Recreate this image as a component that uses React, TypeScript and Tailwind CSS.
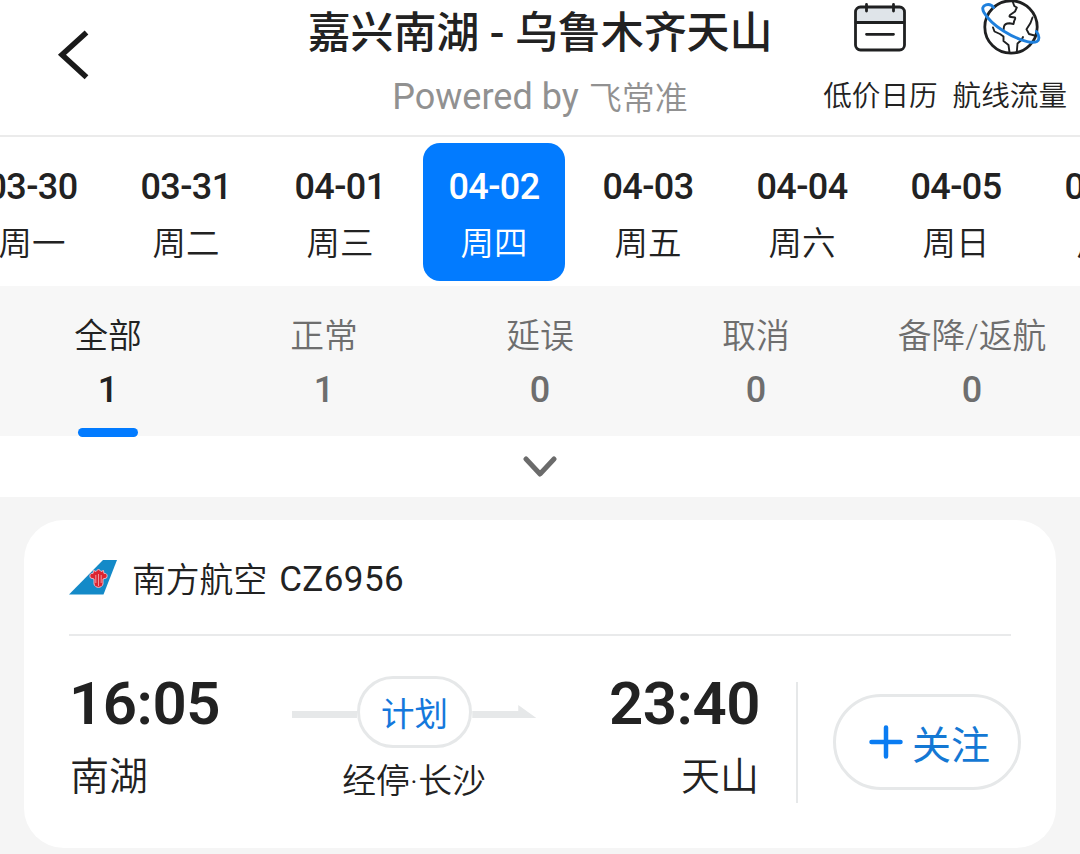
import React from 'react';

interface DateItem {
  date: string;
  weekday: string;
}

interface StatusItem {
  label: string;
  count: number;
}

const dates: DateItem[] = [
  { date: '03-30', weekday: '周一' },
  { date: '03-31', weekday: '周二' },
  { date: '04-01', weekday: '周三' },
  { date: '04-02', weekday: '周四' },
  { date: '04-03', weekday: '周五' },
  { date: '04-04', weekday: '周六' },
  { date: '04-05', weekday: '周日' },
  { date: '04-06', weekday: '周一' },
];

const statuses: StatusItem[] = [
  { label: '全部', count: 1 },
  { label: '正常', count: 1 },
  { label: '延误', count: 0 },
  { label: '取消', count: 0 },
  { label: '备降/返航', count: 0 },
];

function CalendarIcon() {
  return (
    <svg width="54" height="54" viewBox="0 0 54 54" fill="none" stroke="#1f2021" strokeWidth="2.8" strokeLinecap="round">
      <path d="M3 22V12a5 5 0 0 1 5-5h38a5 5 0 0 1 5 5v10z" fill="#dfe4e9" stroke="none" />
      <rect x="2.500" y="7" width="49" height="43" rx="5" />
      <path d="M3 22.500h48M13.500 4.500v6.500M40.500 4.500v6.500M13.500 34.300h27" />
    </svg>
  );
}

function GlobeIcon() {
  return (
    <svg width="62" height="58" viewBox="-1 0 62 58" fill="none" strokeLinecap="round" strokeLinejoin="round">
      <circle cx="31" cy="27" r="26.200" stroke="#1f2021" strokeWidth="2.800" />
      <g stroke="#1f2021" strokeWidth="1.900">
        <path d="M33 2.500L34.300 6l2.500 1.500L35 11.500l-5 3.500c-1 1.500-.500 2 1 2l4 .500c1 1.500-1 2.500-1 4.500l-.500 2-4-.800c-3 0-5 .800-5.500 3.300l-.500 3.500" />
        <path d="M13 27.500l1.500 4 5.500 2.500 3.500 2.500V41l5 4 1 7.500M36.800 52l.700-8.500 4-3.500 1.500-3" />
        <path d="M52.500 17.500L50.500 23l-4 6.300L49 34l5.500 1.500" />
      </g>
      <path
        d="M13.500 7.500C11.500 4.500 8.500 4.200 6 4.800 2.500 5.800 1.800 8.500 4 12.500c3.500 6 11.500 13.500 19.500 18.500C29 34.500 34 37 40 39.300c7 2.600 13.500 3.900 17 2.200 3-1.500 2-6.500-.500-10"
        stroke="#1f80dd"
        strokeWidth="2.900"
      />
    </svg>
  );
}

function AirlineLogo() {
  return (
    <svg width="48" height="36" viewBox="0 0 48 36" fill="none">
      <path d="M34 1h14L34.500 35.500H0z" fill="#148ac8" />
      <path
        d="M21.500 19c-1.500-3 0-5 2.500-4.500l.500-3 2.500 1 2.500-2.500 2.500 2.500 2.500-1 .500 3c2.500-.500 4 1.500 2.500 4.500L34 20v5c-1 4.500-8 4.500-9 0v-5z"
        fill="#dc2430"
        stroke="#f3b6c4"
        strokeWidth="1"
      />
      <path d="M26.800 16v8M29.500 15v12M32.200 16v8" stroke="#f6c9d2" strokeWidth=".7" />
    </svg>
  );
}

function Header() {
  return (
    <header className="flex h-[137px] shrink-0 justify-between border-b-2 border-[#ebebeb] bg-white">
      <div className="w-[270px] pt-[30px] pl-[57px]">
        <svg width="34" height="50" viewBox="0 0 34 50" fill="none" stroke="#1a1a1a" strokeWidth="5.500">
          <path d="M29.500 2.500L5 24.800l24.500 22.500" />
        </svg>
      </div>
      <div className="flex flex-col items-center whitespace-nowrap">
        <h1 className="h-[64px] text-[43px] leading-[66px] font-medium tracking-[-0.1px] text-[#222]">嘉兴南湖 - 乌鲁木齐天山</h1>
        <p className="flex h-[66px] items-center gap-[10px] text-[#919191]">
          <span className="text-[36px]">Powered by</span>
          <span className="pt-[3px] text-[33px] font-[350]">飞常准</span>
        </p>
      </div>
      <nav className="flex w-[270px] justify-end gap-[15px] pr-[13px] text-[28.600px] font-[350] whitespace-nowrap text-[#222]">
        <div className="flex flex-col items-center">
          <CalendarIcon />
          <span className="mt-[21px] leading-[42px]">低价日历</span>
        </div>
        <div className="flex flex-col items-center">
          <GlobeIcon />
          <span className="mt-[17px] leading-[42px]">航线流量</span>
        </div>
      </nav>
    </header>
  );
}

function DateStrip({ selected }: { selected: string }) {
  return (
    <div className="flex h-[149px] shrink-0 overflow-hidden bg-white pt-[6px]">
      <div className="-ml-[45px] flex">
        {dates.map((item) => (
          <div key={item.date} className="w-[154px] shrink-0 px-[6px]">
            <div
              className={`flex h-[138px] flex-col items-center rounded-[17px] pt-[18px] ${
                item.date === selected ? 'bg-[#027bff] text-white' : 'text-[#222]'
              }`}
            >
              <span className="text-[36px] leading-[52px] font-medium tracking-[-0.6px]">{item.date}</span>
              <span className="text-[33.500px] leading-[61px] font-[350]">{item.weekday}</span>
            </div>
          </div>
        ))}
      </div>
    </div>
  );
}

function StatusTabs() {
  return (
    <div className="relative z-10 grid h-[150px] shrink-0 grid-cols-5 bg-[#f7f7f7]">
      {statuses.map((item, index) => (
        <div
          key={item.label}
          className={`flex flex-col items-center pt-[23px] ${index === 0 ? 'text-[#222]' : 'text-[#6e6e6e]'}`}
        >
          <span className="text-[33.800px] leading-[56px] font-[350]">{item.label}</span>
          <span className="text-[36px] leading-[50px] font-medium">{item.count}</span>
          {index === 0 && <span className="mt-[13px] h-[9px] w-[60px] shrink-0 rounded-full bg-[#027bff]" />}
        </div>
      ))}
    </div>
  );
}

function FlightCard() {
  return (
    <section className="h-[328px] rounded-[40px] bg-white pr-[36px] pl-[45px] text-[#222]">
      <div className="mr-[9px] flex h-[116px] items-center border-b-2 border-[#e9eaeb]">
        <AirlineLogo />
        <span className="ml-[15px] pt-[9px] text-[33.800px] font-[350]">南方航空</span>
        <span className="ml-[12px] pt-[7px] text-[35px] tracking-[0.400px]">CZ6956</span>
      </div>
      <div className="flex whitespace-nowrap">
        <div className="w-[223px] shrink-0 pt-[36px]">
          <div className="text-[60px] leading-[64px] font-semibold tracking-[-0.500px]">16:05</div>
          <div className="mt-[11px] ml-[1px] text-[39px] leading-[60px] font-[350]">南湖</div>
        </div>
        <div className="flex w-[244px] shrink-0 flex-col items-center pt-[40px]">
          <div className="flex w-full items-center">
            <div className="mt-[5px] h-[7px] flex-1 bg-[#e6e8e9]" />
            <div className="flex h-[72px] w-[115px] items-center justify-center rounded-full border-[3px] border-[#e6e8e9] pt-[7px] pl-[1px] text-[33.500px] text-[#1478dc]">
              计划
            </div>
            <svg className="flex-1" width="64" height="14" viewBox="0 0 64 14">
              <path d="M0 6h46V0l18 13H0z" fill="#e6e8e9" />
            </svg>
          </div>
          <div className="mt-[9px] text-[33.800px] leading-[50px] font-[350]">经停·长沙</div>
        </div>
        <div className="w-[224px] shrink-0 pt-[36px] text-right">
          <div className="text-[60px] leading-[64px] font-semibold tracking-[-0.500px]">23:40</div>
          <div className="mt-[11px] mr-[1px] text-[39px] leading-[60px] font-[350]">天山</div>
        </div>
        <div className="mt-[46px] ml-[36px] h-[121px] w-[2px] shrink-0 bg-[#e6e8e9]" />
        <button className="mt-[58px] ml-[35px] flex h-[96px] w-[188px] shrink-0 items-center justify-center gap-[9px] rounded-full border-[3px] border-[#e6e8e9] pl-[5px] text-[39px] text-[#1478d4]">
          <svg width="34" height="36" viewBox="0 0 34 36" stroke="#0a7cf2" strokeWidth="4.500" strokeLinecap="round">
            <path d="M2.500 18h29M17 3.500v29" />
          </svg>
          <span className="pt-[8px]">关注</span>
        </button>
      </div>
    </section>
  );
}

export default function App() {
  return (
    <div className="flex h-[854px] w-[1080px] flex-col overflow-hidden bg-[#f5f5f5] font-['Roboto','Noto_Sans_CJK_SC',sans-serif]">
      <Header />
      <DateStrip selected="04-02" />
      <StatusTabs />
      <div className="flex h-[61px] shrink-0 items-center justify-center bg-white">
        <svg width="34" height="22" viewBox="0 0 34 22" fill="none" stroke="#6b6b6b" strokeWidth="5" strokeLinecap="round" strokeLinejoin="round">
          <path d="M3 3l14 15L31 3" />
        </svg>
      </div>
      <main className="px-[24px] pt-[23px]">
        <FlightCard />
      </main>
    </div>
  );
}
